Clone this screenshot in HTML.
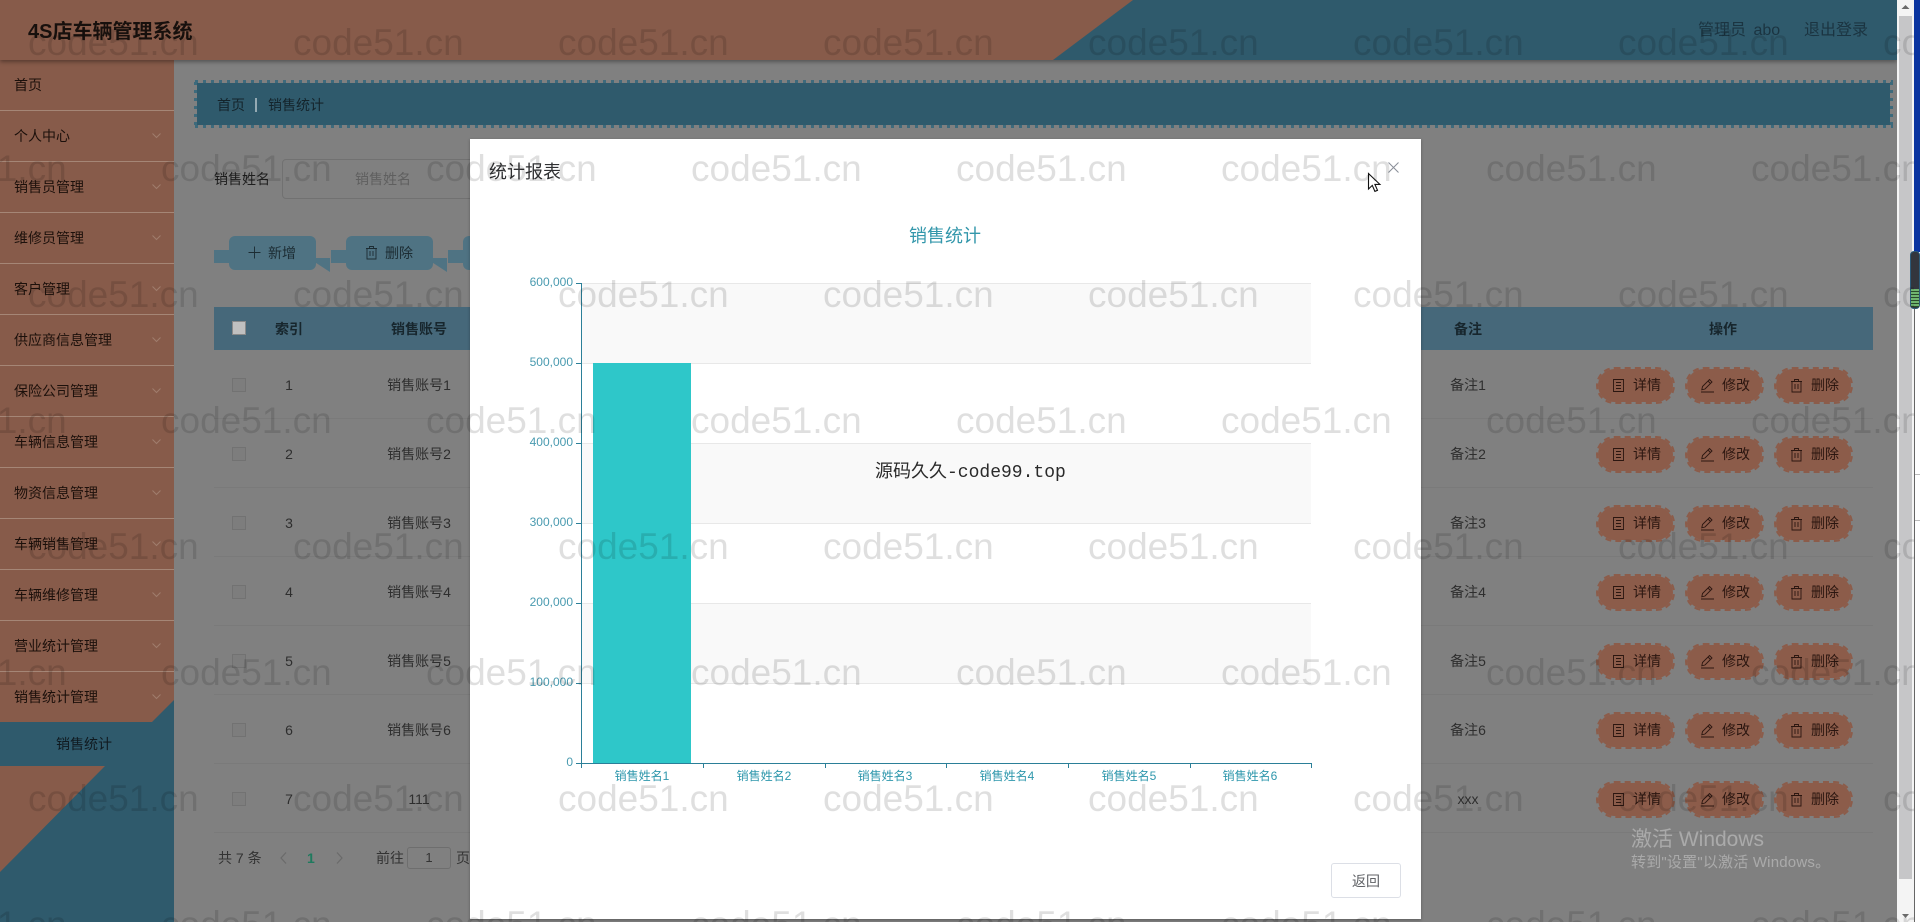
<!DOCTYPE html>
<html lang="zh-CN">
<head>
<meta charset="utf-8">
<title>4S店车辆管理系统</title>
<style>
*{box-sizing:border-box;margin:0;padding:0}
html,body{width:1920px;height:922px;overflow:hidden;background:#fff}
body{position:relative;font-family:"Liberation Sans","Noto Sans CJK SC",sans-serif;font-size:14px;color:#222}
.a{position:absolute}
#page{position:absolute;left:0;top:0;width:1897px;height:922px;background:#808080;overflow:hidden}
#hdr{position:absolute;left:0;top:0;width:1897px;height:60px;box-shadow:0 2px 4px rgba(0,0,0,.35);z-index:3}
#side{position:absolute;left:0;top:60px;width:174px;height:862px;background:#2f5a6c;overflow:hidden}
.it{position:absolute;left:0;width:174px;height:51px;line-height:50px;padding-left:14px;color:#1c100b;background:#875b4a;border-bottom:1px solid #a58676;font-size:14px}
.it i{position:absolute;left:152px;top:20px;width:9px;height:9px;line-height:0}
.it svg{display:block}
.bar{position:absolute;left:197px;top:83px;width:1693px;height:42px;background:#2f5a6c}
.dh{position:absolute;left:195px;width:1698px;height:3px;background:repeating-linear-gradient(90deg,#3d6a7c 0 3px,transparent 3px 8px)}
.dv{position:absolute;top:82px;width:3px;height:44px;background:repeating-linear-gradient(#3d6a7c 0 3px,transparent 3px 8px)}
.ths{position:absolute;font-weight:700;color:#17262d;transform:translateX(-50%);line-height:20px;top:319px;white-space:nowrap}
.row{position:absolute;left:214px;width:1659px;height:69px;border-bottom:1px solid #7a7a7a}
.c{position:absolute;top:25px;line-height:20px;transform:translateX(-50%);color:#2e2e2e;white-space:nowrap}
.cb{position:absolute;left:18px;top:28px;width:14px;height:14px;border:1px solid #727272;background:#7d7d7d}
.btn{position:absolute;top:17px;width:79px;height:37px;background:#8c5c4a;background-clip:padding-box;border:2px dashed #8c5c4a;border-radius:19px;color:#2b1610;font-size:14px;line-height:33px;padding-left:35px;white-space:nowrap}
.btn svg{position:absolute;left:13px;top:9px;width:15px;height:15px;fill:none;stroke:#2b1610;stroke-width:.9}
.b1{left:1382px}.b2{left:1471px}.b3{left:1560px}
.tb{position:absolute;top:236px;width:87px;height:34px;background:#4f7383;border-radius:6px;color:#1c2c33;line-height:34px;padding-left:39px}
.tb svg{position:absolute;left:18px;top:9px;width:15px;height:15px;fill:none;stroke:#1c2c33;stroke-width:.9}
.tl{position:absolute;top:250px;width:16px;height:13px;background:#4f7383}
.tr{position:absolute;top:258px;width:15px;height:14px;background:#4f7383;clip-path:polygon(0 0,100% 0,100% 100%,0 30%)}
#modal{position:absolute;left:470px;top:139px;width:951px;height:780px;background:#fff;box-shadow:0 1px 3px rgba(0,0,0,.3);z-index:5}
#wm{position:absolute;left:0;top:0;width:1914px;height:922px;overflow:hidden;z-index:9;pointer-events:none}
#wm div{position:absolute;white-space:nowrap;font-size:37px;line-height:40px;color:rgba(0,0,0,.125);font-family:"Liberation Sans",sans-serif;height:40px}
#wm span{display:inline-block;width:265px}
.act{position:absolute;left:1631px;color:rgba(255,255,255,.33);white-space:nowrap;z-index:10}
.pg{position:absolute;top:848px;line-height:20px;font-size:14px;color:#333;white-space:nowrap}
</style>
</head>
<body>
<svg width="0" height="0" style="position:absolute">
<defs>
<symbol id="doc" viewBox="0 0 15 15"><path d="M2.5 1.5h10v12h-10zM5 4.5h5M5 7.5h5M5 10.5h5"/></symbol>
<symbol id="pen" viewBox="0 0 15 15"><path d="M9.5 1.5l2.5 2.5-7 7-3.2.8.7-3.3zM1 14h13M8 3l2.5 2.5"/></symbol>
<symbol id="del" viewBox="0 0 15 15"><path d="M2 3.5h11M5.5 3.5v-2h4v2M3 3.5v10.5h9V3.5M6 6v5M9 6v5"/></symbol>
<symbol id="plus" viewBox="0 0 15 15"><path d="M7.5 1.5v12M1.5 7.5h12"/></symbol>
<symbol id="chev" viewBox="0 0 9 9"><path d="M.5 2.5l4 4 4-4" fill="none" stroke="#a07c6d" stroke-width="1"/></symbol>
</defs>
</svg>

<div id="page">
  <div id="hdr">
    <svg class="a" style="left:0;top:0" width="1897" height="60"><rect width="1897" height="60" fill="#2f5a6c"/><polygon points="0,0 1133,0 1053,60 0,60" fill="#875b4a"/></svg>
    <div class="a" style="left:28px;top:18px;font-size:20px;font-weight:700;line-height:28px;color:#17100d;white-space:nowrap">4S店车辆管理系统</div>
    <div class="a" style="left:1698px;top:20px;font-size:16px;line-height:22px;color:#1b3441;white-space:nowrap;word-spacing:3px">管理员 abo</div>
    <div class="a" style="left:1804px;top:20px;font-size:16px;line-height:22px;color:#1b3441;white-space:nowrap">退出登录</div>
  </div>

  <div id="side">
    <div class="it" style="top:0">首页</div>
    <div class="it" style="top:51px">个人中心<i><svg width="9" height="9"><use href="#chev"/></svg></i></div>
    <div class="it" style="top:102px">销售员管理<i><svg width="9" height="9"><use href="#chev"/></svg></i></div>
    <div class="it" style="top:153px">维修员管理<i><svg width="9" height="9"><use href="#chev"/></svg></i></div>
    <div class="it" style="top:204px">客户管理<i><svg width="9" height="9"><use href="#chev"/></svg></i></div>
    <div class="it" style="top:255px">供应商信息管理<i><svg width="9" height="9"><use href="#chev"/></svg></i></div>
    <div class="it" style="top:306px">保险公司管理<i><svg width="9" height="9"><use href="#chev"/></svg></i></div>
    <div class="it" style="top:357px">车辆信息管理<i><svg width="9" height="9"><use href="#chev"/></svg></i></div>
    <div class="it" style="top:408px">物资信息管理<i><svg width="9" height="9"><use href="#chev"/></svg></i></div>
    <div class="it" style="top:459px">车辆销售管理<i><svg width="9" height="9"><use href="#chev"/></svg></i></div>
    <div class="it" style="top:510px">车辆维修管理<i><svg width="9" height="9"><use href="#chev"/></svg></i></div>
    <div class="it" style="top:561px">营业统计管理<i><svg width="9" height="9"><use href="#chev"/></svg></i></div>
    <div class="it" style="top:612px;border-bottom:0;clip-path:polygon(0 0,100% 0,100% 28px,152px 50px,0 50px)">销售统计管理<i><svg width="9" height="9"><use href="#chev"/></svg></i></div>
    <div class="a" style="left:0;top:662px;width:168px;height:44px;line-height:44px;text-align:center;color:#101a20">销售统计</div>
    <svg class="a" style="left:0;top:706px" width="174" height="110"><polygon points="0,0 105,0 0,106" fill="#875b4a"/></svg>
  </div>

  <div class="bar"></div>
  <div class="dh" style="top:80px"></div>
  <div class="dh" style="top:125px"></div>
  <div class="dv" style="left:194px"></div>
  <div class="dv" style="left:1890px"></div>
  <div class="a" style="left:217px;top:95px;line-height:20px;color:#14242b;white-space:nowrap">首页</div>
  <div class="a" style="left:255px;top:98px;width:2px;height:14px;background:#94aab3"></div>
  <div class="a" style="left:268px;top:95px;line-height:20px;color:#14242b;white-space:nowrap">销售统计</div>

  <div class="a" style="left:214px;top:169px;line-height:20px;color:#1e1e1e;white-space:nowrap">销售姓名</div>
  <div class="a" style="left:282px;top:159px;width:200px;height:40px;border:1px solid #717171;border-radius:4px"></div>
  <div class="a" style="left:355px;top:169px;line-height:20px;color:#5f5f5f;white-space:nowrap">销售姓名</div>

  <div class="tl" style="left:214px"></div><div class="tb" style="left:229px"><svg><use href="#plus"/></svg>新增</div><div class="tr" style="left:315px"></div>
  <div class="tl" style="left:331px"></div><div class="tb" style="left:346px"><svg><use href="#del"/></svg>删除</div><div class="tr" style="left:432px"></div>
  <div class="tl" style="left:448px"></div><div class="tb" style="left:463px"></div>

  <div class="a" style="left:214px;top:307px;width:1659px;height:43px;background:#46687a"></div>
  <div class="a" style="left:232px;top:321px;width:14px;height:14px;background:#c0c0c0;border:1px solid #8a8a8a"></div>
  <div class="ths" style="left:289px">索引</div>
  <div class="ths" style="left:419px">销售账号</div>
  <div class="ths" style="left:1468px">备注</div>
  <div class="ths" style="left:1723px">操作</div>

  <div class="row" style="top:350px"><span class="cb"></span><span class="c" style="left:75px">1</span><span class="c" style="left:205px">销售账号1</span><span class="c" style="left:1254px">备注1</span>
    <span class="btn b1"><svg><use href="#doc"/></svg>详情</span><span class="btn b2"><svg><use href="#pen"/></svg>修改</span><span class="btn b3"><svg><use href="#del"/></svg>删除</span></div>
  <div class="row" style="top:419px"><span class="cb"></span><span class="c" style="left:75px">2</span><span class="c" style="left:205px">销售账号2</span><span class="c" style="left:1254px">备注2</span>
    <span class="btn b1"><svg><use href="#doc"/></svg>详情</span><span class="btn b2"><svg><use href="#pen"/></svg>修改</span><span class="btn b3"><svg><use href="#del"/></svg>删除</span></div>
  <div class="row" style="top:488px"><span class="cb"></span><span class="c" style="left:75px">3</span><span class="c" style="left:205px">销售账号3</span><span class="c" style="left:1254px">备注3</span>
    <span class="btn b1"><svg><use href="#doc"/></svg>详情</span><span class="btn b2"><svg><use href="#pen"/></svg>修改</span><span class="btn b3"><svg><use href="#del"/></svg>删除</span></div>
  <div class="row" style="top:557px"><span class="cb"></span><span class="c" style="left:75px">4</span><span class="c" style="left:205px">销售账号4</span><span class="c" style="left:1254px">备注4</span>
    <span class="btn b1"><svg><use href="#doc"/></svg>详情</span><span class="btn b2"><svg><use href="#pen"/></svg>修改</span><span class="btn b3"><svg><use href="#del"/></svg>删除</span></div>
  <div class="row" style="top:626px"><span class="cb"></span><span class="c" style="left:75px">5</span><span class="c" style="left:205px">销售账号5</span><span class="c" style="left:1254px">备注5</span>
    <span class="btn b1"><svg><use href="#doc"/></svg>详情</span><span class="btn b2"><svg><use href="#pen"/></svg>修改</span><span class="btn b3"><svg><use href="#del"/></svg>删除</span></div>
  <div class="row" style="top:695px"><span class="cb"></span><span class="c" style="left:75px">6</span><span class="c" style="left:205px">销售账号6</span><span class="c" style="left:1254px">备注6</span>
    <span class="btn b1"><svg><use href="#doc"/></svg>详情</span><span class="btn b2"><svg><use href="#pen"/></svg>修改</span><span class="btn b3"><svg><use href="#del"/></svg>删除</span></div>
  <div class="row" style="top:764px"><span class="cb"></span><span class="c" style="left:75px">7</span><span class="c" style="left:205px">111</span><span class="c" style="left:1254px">xxx</span>
    <span class="btn b1"><svg><use href="#doc"/></svg>详情</span><span class="btn b2"><svg><use href="#pen"/></svg>修改</span><span class="btn b3"><svg><use href="#del"/></svg>删除</span></div>

  <div class="pg" style="left:218px">共 7 条</div>
  <svg class="a" style="left:278px;top:851px" width="70" height="14" fill="none" stroke="#6a6a6a" stroke-width="1.2"><path d="M8 1.5L3 7l5 5.5M59 1.5L64 7l-5 5.5"/></svg>
  <div class="pg" style="left:307px;font-weight:700;color:#1f7a5e">1</div>
  <div class="pg" style="left:376px">前往</div>
  <div class="a" style="left:407px;top:847px;width:44px;height:22px;border:1px solid #6e6e6e;border-radius:3px;text-align:center;line-height:20px;font-size:13px;color:#333">1</div>
  <div class="pg" style="left:456px">页</div>

  <div id="modal">
    <div class="a" style="left:19px;top:21px;font-size:18px;line-height:24px;color:#303133;white-space:nowrap">统计报表</div>
    <svg class="a" style="left:918px;top:23px" width="11" height="11" stroke="#8a8f99" stroke-width="1"><path d="M.5.5l10 10M10.5.5l-10 10"/></svg>
    <svg class="a" style="left:0;top:0" width="951" height="780" font-family="Liberation Sans,Noto Sans CJK SC,sans-serif">
      <text x="475" y="103" font-size="18" fill="#3397ab" text-anchor="middle">销售统计</text>
      <g transform="translate(-470,-139)">
        <rect x="581" y="283" width="730" height="80" fill="#f9f9f9"/>
        <rect x="581" y="443" width="730" height="80" fill="#f9f9f9"/>
        <rect x="581" y="603" width="730" height="80" fill="#f9f9f9"/>
        <g stroke="#e8e8e8" stroke-width="1">
          <path d="M581 283.5H1311M581 363.5H1311M581 443.5H1311M581 523.5H1311M581 603.5H1311M581 683.5H1311"/>
        </g>
        <rect x="593" y="363" width="98" height="400" fill="#2ec7c9"/>
        <g stroke="#2b7f98" stroke-width="1" fill="none">
          <path d="M581.5 283V768M576 283.5H581M576 363.5H581M576 443.5H581M576 523.5H581M576 603.5H581M576 683.5H581M576 763.5H1311"/>
          <path d="M703.5 763V768M825.5 763V768M946.5 763V768M1068.5 763V768M1190.5 763V768M1311.5 763V768"/>
        </g>
        <g font-size="12" fill="#4a9bb0" text-anchor="end">
          <text x="573" y="286">600,000</text>
          <text x="573" y="366">500,000</text>
          <text x="573" y="446">400,000</text>
          <text x="573" y="526">300,000</text>
          <text x="573" y="606">200,000</text>
          <text x="573" y="686">100,000</text>
          <text x="573" y="766">0</text>
        </g>
        <g font-size="12" fill="#2e97ac" text-anchor="middle">
          <text x="642" y="780">销售姓名1</text>
          <text x="764" y="780">销售姓名2</text>
          <text x="885" y="780">销售姓名3</text>
          <text x="1007" y="780">销售姓名4</text>
          <text x="1129" y="780">销售姓名5</text>
          <text x="1250" y="780">销售姓名6</text>
        </g>
      </g>
    </svg>
    <div class="a" style="left:405px;top:322px;font-size:18px;line-height:24px;color:#2a2a2a;font-family:'Liberation Mono','Noto Sans CJK SC',monospace;white-space:nowrap">源码久久-code99.top</div>
    <div class="a" style="left:861px;top:724px;width:70px;height:35px;border:1px solid #dcdfe6;border-radius:3px;text-align:center;line-height:35px;font-size:14px;color:#606266">返回</div>
    <svg class="a" style="left:897px;top:33px" width="16" height="22"><path d="M1.5 1.5V17l3.8-3.6 2.6 6 2.6-1.1-2.6-5.9h5z" fill="#fff" stroke="#111" stroke-width="1.1"/></svg>
  </div>

  <div class="act" style="top:827px;font-size:21px;line-height:26px">激活 Windows</div>
  <div class="act" style="top:853px;font-size:15px;line-height:20px;letter-spacing:.2px">转到"设置"以激活 Windows。</div>
</div>

<!-- scrollbar & right strip -->
<div class="a" style="left:1897px;top:0;width:17px;height:922px;background:#f4f4f4"></div>
<div class="a" style="left:1899px;top:16px;width:13px;height:863px;background:#c6c6c8"></div>
<svg class="a" style="left:1899px;top:0" width="13" height="922"><path d="M6.5 5l4 4h-8zM3 914h7l-3.5 4z" fill="#6a6a6a"/></svg>
<div class="a" style="left:1914px;top:0;width:6px;height:922px;background:#fff;border-left:1px solid #666"></div>
<div class="a" style="left:1914px;top:0;width:6px;height:252px;background:#0a34a0"></div>
<div class="a" style="left:1910px;top:251px;width:10px;height:58px;border-radius:4px;background:#33363d;border:1px solid #2b5a78"></div>
<div class="a" style="left:1911px;top:289px;width:8px;height:18px;background:repeating-linear-gradient(#6fb56f 0 2px,#2b4a2b 2px 3px)"></div>
<div class="a" style="left:1915px;top:474px;width:5px;height:1px;background:#bbb"></div>
<div class="a" style="left:1915px;top:520px;width:5px;height:1px;background:#bbb"></div>

<div id="wm">
  <div style="left:28px;top:23px"><span>code51.cn</span><span>code51.cn</span><span>code51.cn</span><span>code51.cn</span><span>code51.cn</span><span>code51.cn</span><span>code51.cn</span><span>code51.cn</span></div>
  <div style="left:-104px;top:149px"><span>code51.cn</span><span>code51.cn</span><span>code51.cn</span><span>code51.cn</span><span>code51.cn</span><span>code51.cn</span><span>code51.cn</span><span>code51.cn</span></div>
  <div style="left:28px;top:275px"><span>code51.cn</span><span>code51.cn</span><span>code51.cn</span><span>code51.cn</span><span>code51.cn</span><span>code51.cn</span><span>code51.cn</span><span>code51.cn</span></div>
  <div style="left:-104px;top:401px"><span>code51.cn</span><span>code51.cn</span><span>code51.cn</span><span>code51.cn</span><span>code51.cn</span><span>code51.cn</span><span>code51.cn</span><span>code51.cn</span></div>
  <div style="left:28px;top:527px"><span>code51.cn</span><span>code51.cn</span><span>code51.cn</span><span>code51.cn</span><span>code51.cn</span><span>code51.cn</span><span>code51.cn</span><span>code51.cn</span></div>
  <div style="left:-104px;top:653px"><span>code51.cn</span><span>code51.cn</span><span>code51.cn</span><span>code51.cn</span><span>code51.cn</span><span>code51.cn</span><span>code51.cn</span><span>code51.cn</span></div>
  <div style="left:28px;top:779px"><span>code51.cn</span><span>code51.cn</span><span>code51.cn</span><span>code51.cn</span><span>code51.cn</span><span>code51.cn</span><span>code51.cn</span><span>code51.cn</span></div>
  <div style="left:-104px;top:905px"><span>code51.cn</span><span>code51.cn</span><span>code51.cn</span><span>code51.cn</span><span>code51.cn</span><span>code51.cn</span><span>code51.cn</span><span>code51.cn</span></div>
</div>
</body>
</html>
